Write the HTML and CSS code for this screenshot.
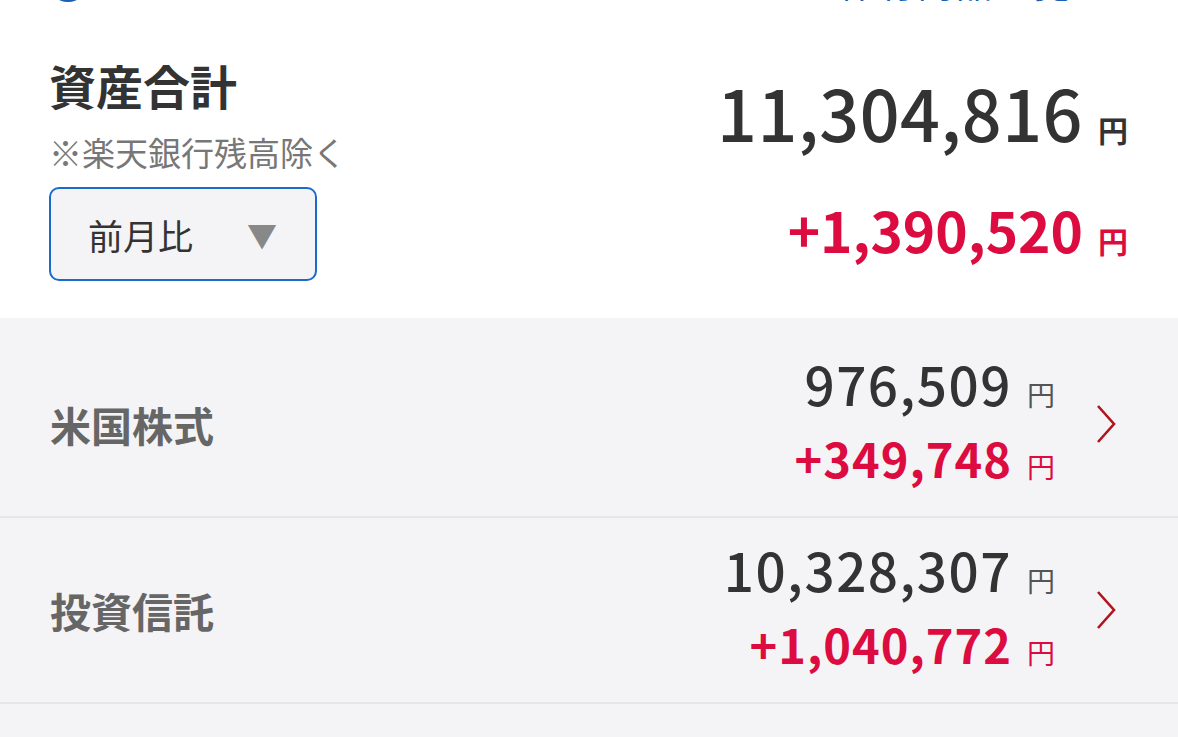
FILE: index.html
```html
<!DOCTYPE html>
<html lang="ja">
<head>
    <meta charset="UTF-8">
    <meta name="viewport" content="width=device-width, initial-scale=1.0">
    <title>資産合計</title>
    <link rel="stylesheet" href="styles.css">
</head>
<body>
    <div class="topbar">
        <div class="topbar-left">
            <span class="topbar-icon"></span>
            <span class="topbar-label">保有資産</span>
        </div>
        <a class="topbar-link" href="#">保有商品一覧 <span class="topbar-arrow">&#x203A;</span></a>
    </div>

    <section class="summary">
        <div class="summary-left">
            <h1 class="summary-title">資産合計</h1>
            <p class="summary-note">※楽天銀行残高除く</p>
            <div class="period-select">
                <span>前月比</span>
                <span class="period-arrow">&#x25BC;</span>
            </div>
        </div>
        <div class="summary-right">
            <div class="total"><span class="total-num">11,304,816</span><span class="yen">円</span></div>
            <div class="total-diff"><span class="diff-num">+1,390,520</span><span class="yen">円</span></div>
        </div>
    </section>

    <ul class="assets">
        <li class="asset-row asset-row-first">
            <span class="asset-name">米国株式</span>
            <div class="asset-values">
                <div class="asset-amount">976,509<span class="yen-s">円</span></div>
                <div class="asset-diff">+349,748<span class="yen-s">円</span></div>
            </div>
            <svg class="chevron" width="22" height="40" viewBox="0 0 22 40"><polyline points="3,2 19,20 3,38" fill="none" stroke="#b0141c" stroke-width="2.6"/></svg>
        </li>
        <li class="asset-row">
            <span class="asset-name">投資信託</span>
            <div class="asset-values">
                <div class="asset-amount">10,328,307<span class="yen-s">円</span></div>
                <div class="asset-diff">+1,040,772<span class="yen-s">円</span></div>
            </div>
            <svg class="chevron" width="22" height="40" viewBox="0 0 22 40"><polyline points="3,2 19,20 3,38" fill="none" stroke="#b0141c" stroke-width="2.6"/></svg>
        </li>
        <li class="asset-row asset-row-empty"></li>
    </ul>
</body>
</html>
```

FILE: styles.css
```css
body {
    font-family: "Noto Sans CJK JP", "Noto Sans", sans-serif;
    background-color: #fff;
    color: #333;
    margin: 0;
    padding: 0;
    width: 1178px;
    overflow: hidden;
}
.topbar {
    display: flex;
    justify-content: space-between;
    align-items: center;
    height: 48px;
    margin-top: -42px;
    padding: 0 62px 0 48px;
}
.topbar-left {
    display: flex;
    align-items: center;
    gap: 56px;
}
.topbar-icon {
    width: 40px;
    height: 40px;
    border-radius: 50%;
    background-color: #1a5fb4;
}
.topbar-label {
    font-size: 28px;
    color: #aaa;
}
.topbar-link {
    font-size: 36px;
    color: #1a5fb4;
    text-decoration: none;
    letter-spacing: 3px;
}
.topbar-arrow {
    margin-left: 18px;
}
.summary {
    display: flex;
    justify-content: space-between;
    padding: 47px 50px 37px 49px;
}
.summary-left {
    display: flex;
    flex-direction: column;
}
.summary-title {
    margin: 0 0 14px;
    font-size: 47px;
    line-height: 64px;
    font-weight: 700;
    color: #333;
}
.summary-note {
    margin: 0;
    font-size: 33px;
    line-height: 42px;
    color: #777;
}
.period-select {
    display: flex;
    justify-content: space-between;
    align-items: center;
    box-sizing: border-box;
    width: 268px;
    height: 94px;
    margin-top: 14px;
    padding: 0 38px 0 37px;
    border: 2.5px solid #1b6bcb;
    border-radius: 10px;
    background-color: #f4f4f6;
    font-size: 35px;
    color: #333;
}
.period-arrow {
    font-size: 30px;
    color: #888;
}
.summary-right {
    display: flex;
    flex-direction: column;
    align-items: flex-end;
}
.total, .total-diff {
    display: flex;
    align-items: baseline;
}
.total {
    margin-top: 11px;
    line-height: 96px;
}
.total-num {
    font-size: 70px;
    font-weight: 500;
    letter-spacing: 0.5px;
    color: #333;
}
.total-diff {
    line-height: 80px;
    margin-top: 12px;
}
.diff-num {
    font-size: 55px;
    font-weight: 700;
    color: #dc0c40;
}
.yen {
    font-size: 30px;
    font-weight: 700;
    margin-left: 15px;
}
.total .yen {
    color: #333;
}
.total-diff .yen {
    color: #dc0c40;
}
.assets {
    list-style: none;
    margin: 0;
    padding: 0;
    background-color: #f4f4f6;
}
.asset-row {
    display: flex;
    align-items: center;
    height: 184px;
    padding: 0 61px 0 50px;
    border-bottom: 2px solid #e6e6e9;
}
.asset-row-first {
    padding-top: 14px;
}
.asset-name {
    flex: 1;
    font-size: 41px;
    font-weight: 700;
    color: #666;
}
.asset-values {
    display: flex;
    flex-direction: column;
    align-items: flex-end;
}
.asset-amount, .asset-diff {
    display: flex;
    align-items: baseline;
}
.asset-amount {
    font-size: 53px;
    line-height: 64px;
    font-weight: 500;
    color: #333;
    letter-spacing: 1.5px;
}
.asset-diff {
    font-size: 47px;
    line-height: 64px;
    font-weight: 700;
    color: #dc0c40;
    letter-spacing: 1px;
}
.yen-s {
    font-size: 28px;
    font-weight: 400;
    margin-left: 15px;
    letter-spacing: 0;
}
.asset-amount .yen-s {
    color: #555;
}
.chevron {
    margin-left: 40px;
}
.asset-row-empty {
    height: 33px;
    border-bottom: none;
}
```
